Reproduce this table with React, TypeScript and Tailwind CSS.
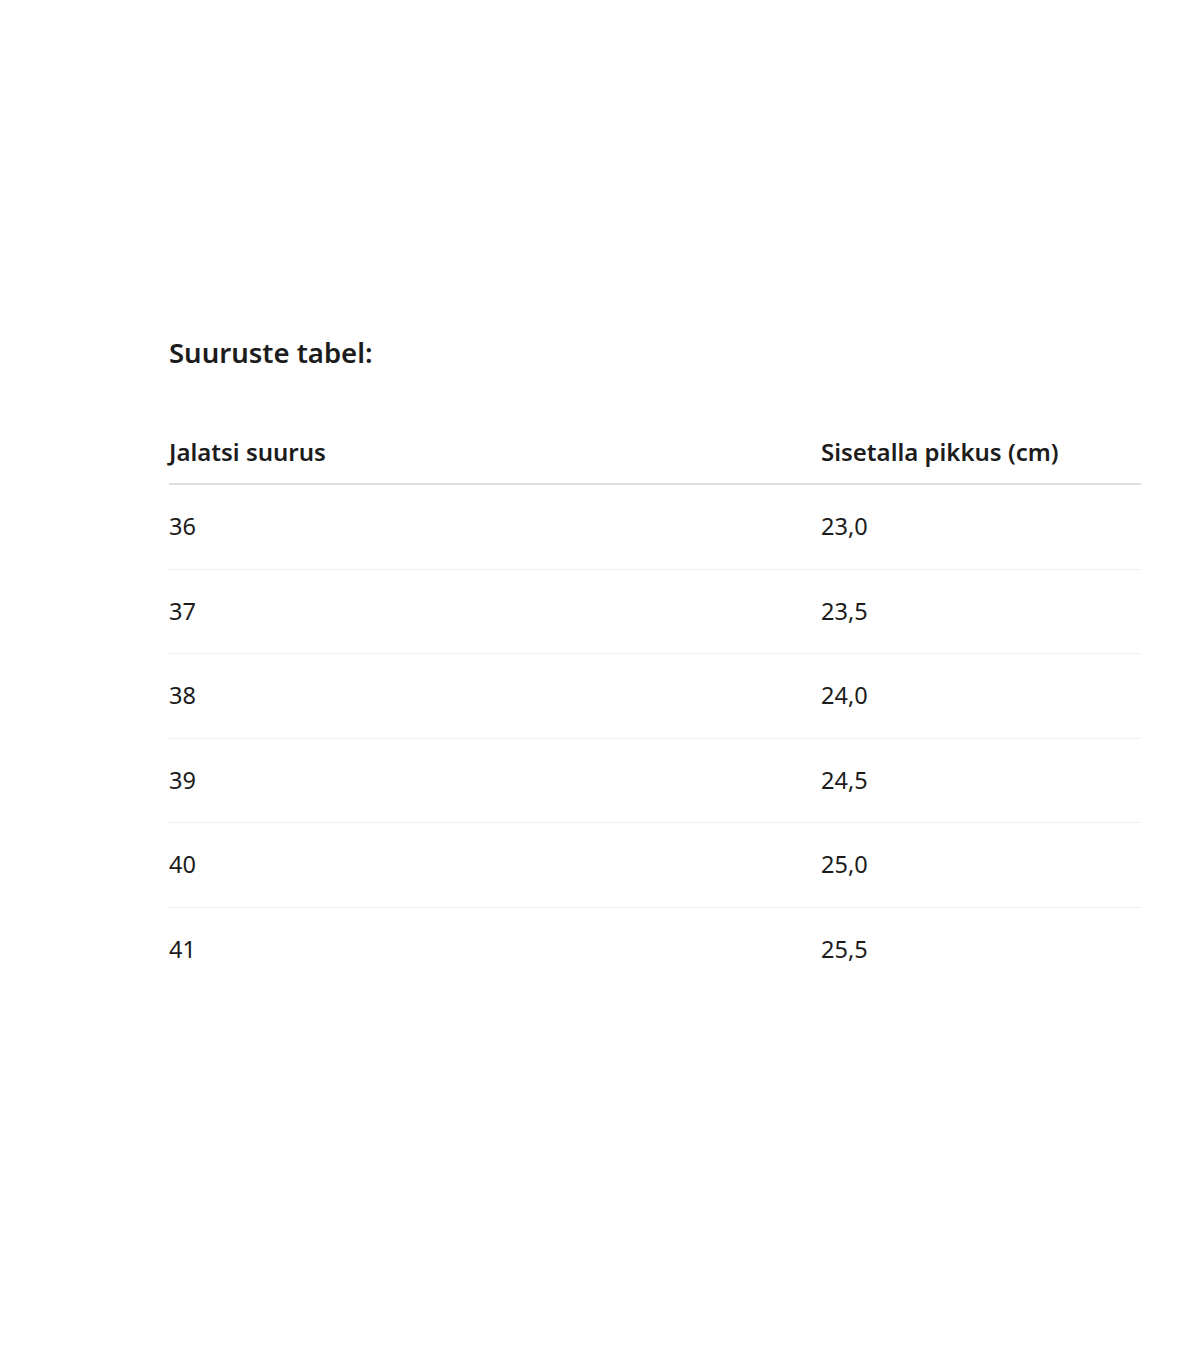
const rows = [
  { size: '36', length: '23,0' },
  { size: '37', length: '23,5' },
  { size: '38', length: '24,0' },
  { size: '39', length: '24,5' },
  { size: '40', length: '25,0' },
  { size: '41', length: '25,5' },
];

export default function App() {
  return (
    <div className="min-h-[1372px] bg-white text-[#1c1c1c] font-['Noto_Sans',sans-serif]">
      <div className="ml-[169px] w-[972px] pt-[334px]">
        <h2 className="text-[27.5px] leading-[38px] font-semibold">Suuruste tabel:</h2>

        {/* size table */}
        <div className="mt-[50px]">
          <div className="flex h-[63px] items-center border-b-2 border-[#dedede] pb-[2px] text-[24px] font-semibold">
            <div className="w-[652px]">Jalatsi suurus</div>
            <div className="flex-1">Sisetalla pikkus (cm)</div>
          </div>
          {rows.map((row, i) => (
            <div
              key={row.size}
              className={
                i < rows.length - 1
                  ? 'flex h-[84.5px] items-center border-b border-[#efefef] text-[23.5px]'
                  : 'flex h-[84.5px] items-center text-[23.5px]'
              }
            >
              <div className="w-[652px]">{row.size}</div>
              <div className="flex-1">{row.length}</div>
            </div>
          ))}
        </div>
      </div>
    </div>
  );
}
